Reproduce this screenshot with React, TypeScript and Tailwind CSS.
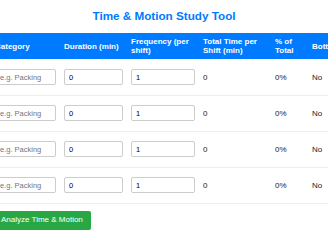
const rows = [0, 1, 2, 3];

export default function App() {
  return (
    <div className="w-[328px] h-[240px] overflow-hidden bg-white pt-[9px] font-['Liberation_Sans',Arial,sans-serif] text-[#222]">
      <h1 className="text-center text-[11.7px] leading-[14px] font-bold text-[#007bff]">
        Time &amp; Motion Study Tool
      </h1>
      <div className="ml-[-9px] mt-[10px] w-[368px]">
        <table className="table-fixed border-collapse w-[368px] text-[8px] leading-[9.2px]">
          <colgroup>
            <col className="w-[69px]" />
            <col className="w-[67px]" />
            <col className="w-[72px]" />
            <col className="w-[72px]" />
            <col className="w-[37px]" />
            <col className="w-[51px]" />
          </colgroup>
          <thead>
            <tr className="bg-[#007bff] text-white text-left">
              <th className="p-[4px] font-bold">Category</th>
              <th className="p-[4px] font-bold">Duration (min)</th>
              <th className="p-[4px] font-bold">Frequency (per shift)</th>
              <th className="p-[4px] font-bold">Total Time per Shift (min)</th>
              <th className="p-[4px] font-bold">% of Total</th>
              <th className="p-[4px] font-bold">Bottleneck?</th>
            </tr>
          </thead>
          <tbody>
            {rows.map((r) => (
              <tr key={r} className="h-[36px] border-b border-[#eeeeee]">
                <td className="px-[4px]">
                  <input
                    className="block w-full h-[16px] px-[4px] border border-[#cccccc] rounded-[2px] text-[7.5px] text-black placeholder:text-[#777]"
                    placeholder="e.g. Packing"
                  />
                </td>
                <td className="px-[4px]">
                  <input
                    className="block w-full h-[16px] px-[4px] border border-[#cccccc] rounded-[2px] text-[7.5px] text-black"
                    defaultValue="0"
                  />
                </td>
                <td className="px-[4px]">
                  <input
                    className="block w-full h-[16px] px-[4px] border border-[#cccccc] rounded-[2px] text-[7.5px] text-black"
                    defaultValue="1"
                  />
                </td>
                <td className="px-[4px]">0</td>
                <td className="px-[4px]">0%</td>
                <td className="px-[4px]">No</td>
              </tr>
            ))}
          </tbody>
        </table>
        <button className="mt-[7px] ml-[2px] h-[19px] px-[8px] rounded-[2px] bg-[#28a745] text-white text-[8px]">
          Analyze Time &amp; Motion
        </button>
      </div>
    </div>
  );
}
